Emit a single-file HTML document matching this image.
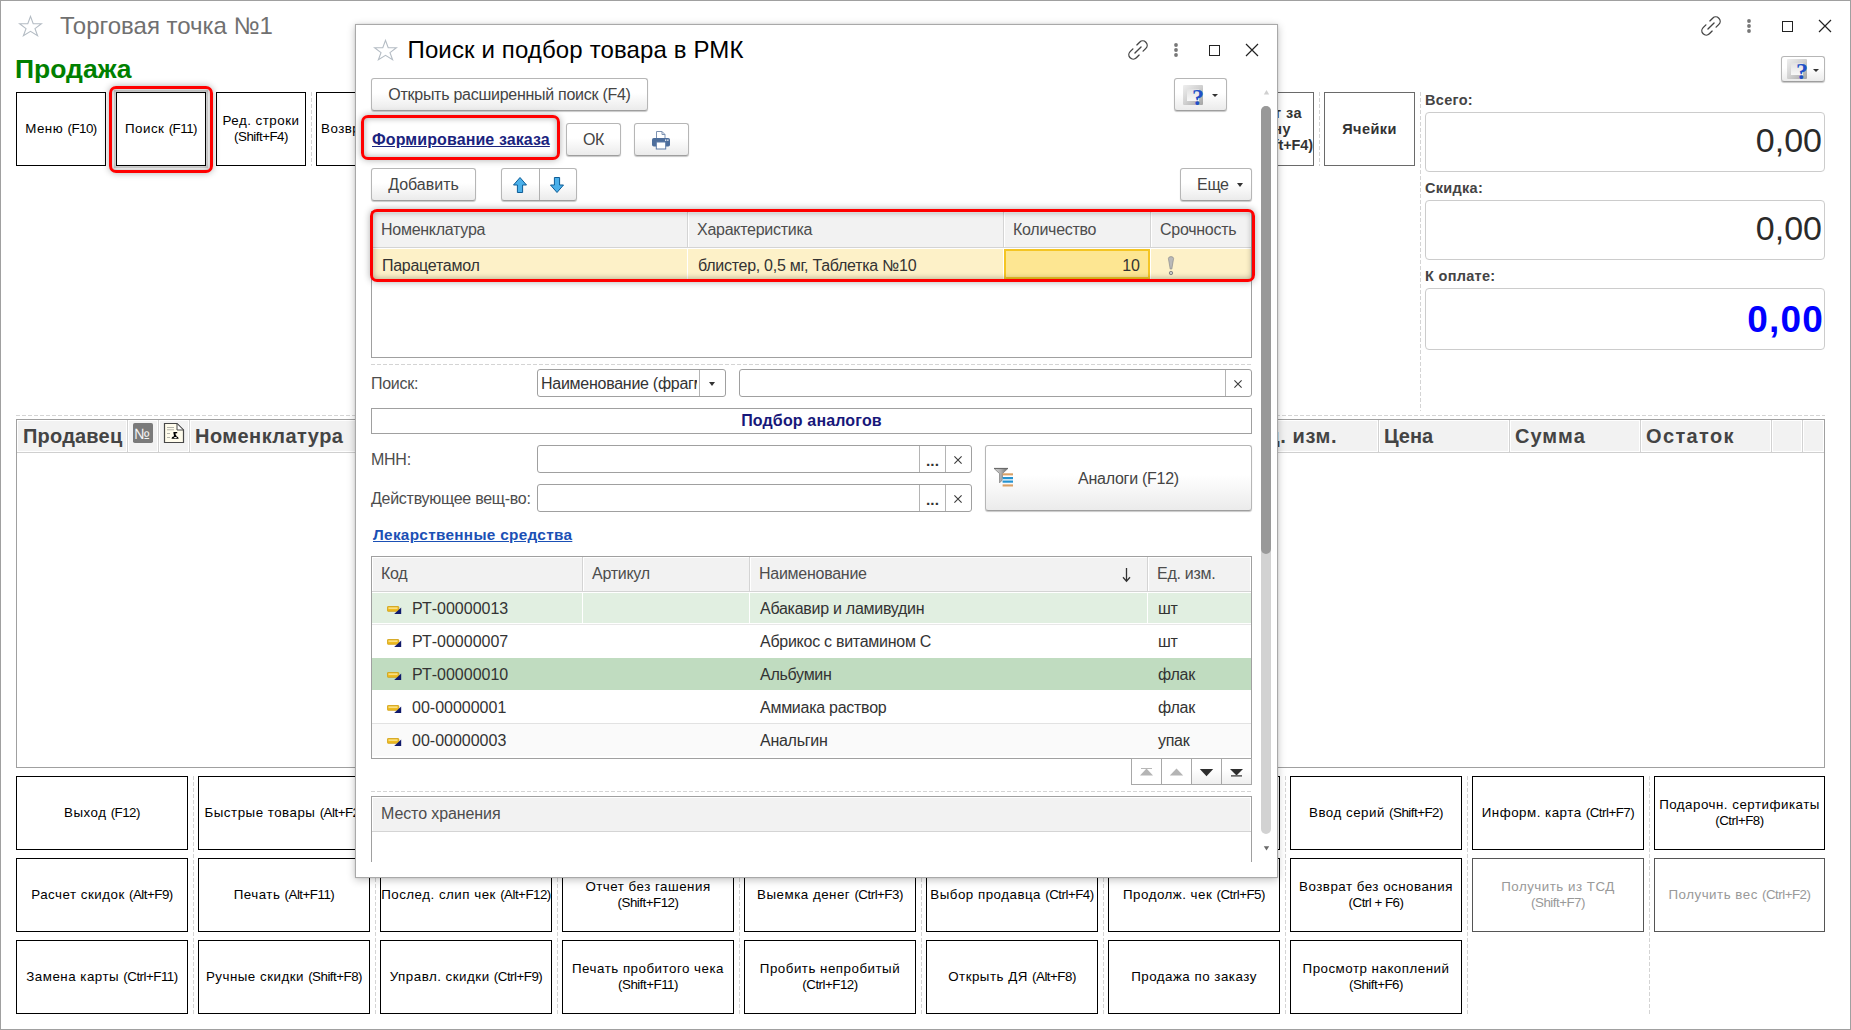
<!DOCTYPE html>
<html lang="ru">
<head>
<meta charset="utf-8">
<title>Торговая точка №1</title>
<style>
*{box-sizing:border-box;margin:0;padding:0}
html,body{width:1851px;height:1030px;overflow:hidden;background:#fff}
body{position:relative;font-family:"Liberation Sans",Arial,sans-serif;color:#333;font-size:13.33px}
.abs{position:absolute}
#frame{position:absolute;left:0;top:0;width:1851px;height:1030px;border:1px solid #a0a0a0;pointer-events:none;z-index:50}
.t{position:absolute;white-space:nowrap;line-height:1}
/* main big buttons */
.bb{position:absolute;border:1px solid #000;background:#fff;display:flex;align-items:center;justify-content:center;text-align:center;font-size:13.33px;line-height:16px;color:#000;letter-spacing:.5px;padding-bottom:1px}
.bb .l{letter-spacing:-.5px}
.bb.dis{border-color:#555;color:#999}
.bb.bold{font-weight:bold;border-color:#6a6a6a;color:#333;font-size:14.5px;letter-spacing:.45px;line-height:16px;padding-top:0}
.vd{position:absolute;width:1px;background:repeating-linear-gradient(180deg,#d4d4d4 0,#d4d4d4 4px,transparent 4px,transparent 6px)}
.hd{position:absolute;height:1px;background:repeating-linear-gradient(90deg,#d4d4d4 0,#d4d4d4 4px,transparent 4px,transparent 6px)}
/* right totals */
.lab{position:absolute;font-weight:bold;font-size:14.5px;letter-spacing:.3px;color:#444;white-space:nowrap;line-height:1}
.fld{position:absolute;left:1425px;width:400px;height:60px;border:1px solid #ccc;border-radius:4px;background:#fff}
.fld span{position:absolute;right:2px;top:8px;font-size:34px;line-height:38px;letter-spacing:0;color:#2a2a2a;white-space:nowrap}
/* main table */
#mt{position:absolute;left:16px;top:419px;width:1809px;height:349px;border:1px solid #a0a0a0;background:#fff}
#mt .h{position:absolute;left:0;top:0;right:0;height:33px;background:#fff;border-bottom:1px solid #cfcfcf}
#mt .c{position:absolute;top:1px;height:30px;background:#f2f2f2}
#mt .s{position:absolute;top:0;width:1px;height:32px;background:#d2d2d2}
#mt .ht{position:absolute;top:5px;font-weight:bold;font-size:20px;line-height:22px;letter-spacing:.6px;color:#444;white-space:nowrap}

/* modal widgets */
.mb{position:absolute;height:33px;border:1px solid #b6b6b6;border-bottom-color:#9e9e9e;border-radius:3px;background:linear-gradient(#fff 0%,#fff 45%,#ebebeb 100%);box-shadow:0 1px 1px rgba(0,0,0,.22);display:flex;align-items:center;justify-content:center;font-size:16px;letter-spacing:-.27px;color:#444;white-space:nowrap;padding-top:1px}
.hb{border:1px solid #b6b6b6;border-bottom-color:#9e9e9e;border-radius:3px;background:linear-gradient(#fff 0%,#fff 45%,#ebebeb 100%);box-shadow:0 1px 1px rgba(0,0,0,.22)}
.dd{display:inline-block;width:0;height:0;border-left:3.5px solid transparent;border-right:3.5px solid transparent;border-top:4px solid #333}
.red{position:absolute;border:3px solid #ff0000;border-radius:7px;box-shadow:0 0 7px rgba(0,0,0,.32),inset 0 0 6px rgba(0,0,0,.35);pointer-events:none}
.tb{position:absolute;border:1px solid #a0a0a0;background:#fff;overflow:hidden}
.tb .th{position:absolute;left:0;right:0;top:0;background:#f2f2f2;border-left:1px solid #fff;border-top:1px solid #fff;border-right:1px solid #fff}
.tb .hl{position:absolute;left:0;right:0;height:1px;background:#d4d4d4}
.tb .row{position:absolute;left:0;right:0}
.tb .cd{position:absolute;width:2px;border-left:1px solid #d4d4d4;border-right:1px solid #fff}
.tb .cw{position:absolute;width:1px;background:#fff}
.hx{position:absolute;margin-left:-1px;font-size:16px;letter-spacing:-.27px;line-height:20px;color:#4d4d4d;white-space:nowrap}
.cx{position:absolute;font-size:16px;letter-spacing:-.27px;line-height:20px;color:#333;white-space:nowrap}
.lb{position:absolute;font-size:16px;letter-spacing:-.27px;line-height:20px;color:#4d4d4d;white-space:nowrap}
.inp{position:absolute;height:28px;border:1px solid #a0a0a0;border-radius:3px;background:#fff;overflow:hidden}
.inp .iv{position:absolute;top:4px;font-size:16px;letter-spacing:-.27px;line-height:20px;color:#333;white-space:nowrap;overflow:hidden}
.inp .sep{position:absolute;top:0;width:1px;height:26px;background:#b4b4b4}
.inp .dots{position:absolute;left:382px;width:25px;top:5px;text-align:center;font-size:15.33px;line-height:20px;font-weight:bold;color:#333}
</style>
</head>
<body>
<div id="frame"></div>

<!-- ===== main window title ===== -->
<svg class="abs" style="left:18px;top:14px" width="25" height="24" viewBox="0 0 25 24"><path d="M12.5 2.4 L15.2 9.6 L23.4 9.7 L17 14.6 L19.6 21.7 L12.5 17.4 L5.4 21.7 L8 14.6 L1.6 9.7 L9.8 9.6 Z" fill="none" stroke="#b4bcc4" stroke-width="1.1" stroke-linejoin="miter"/></svg>
<div class="t" style="left:60px;top:13px;font-size:24px;line-height:26px;color:#707070">Торговая точка №1</div>
<!-- right icons -->
<svg class="abs" style="left:1698.5px;top:13.5px" width="24" height="24" viewBox="-12 -12 24 24" fill="none" stroke="#444" stroke-width="1.35" stroke-linecap="round"><g transform="rotate(-45)"><path d="M2.8 -4.4 H6.7 A4.4 4.4 0 0 1 6.7 4.4 H2.8"/><path d="M-2.8 -4.4 H-6.7 A4.4 4.4 0 0 0 -6.7 4.4 H-2.8"/><path d="M-4.3 0 H4.3"/></g></svg>
<svg class="abs" style="left:1746px;top:18px" width="6" height="16" viewBox="-3 -8 6 16" fill="#777"><circle cx="0" cy="-5" r="1.9"/><circle cx="0" cy="0" r="1.9"/><circle cx="0" cy="5" r="1.9"/></svg>
<div class="abs" style="left:1782px;top:21px;width:11px;height:11px;border:1px solid #222"></div>
<svg class="abs" style="left:1817px;top:19px" width="16" height="14" viewBox="0 0 16 14" stroke="#222" stroke-width="1.2" fill="none"><path d="M2 1 L14 13 M14 1 L2 13"/></svg>

<div class="t" style="left:15px;top:54px;font-size:26.5px;line-height:30px;font-weight:bold;color:#008000">Продажа</div>

<!-- help button main -->
<div class="abs hb" style="left:1781px;top:56px;width:44px;height:26px"></div><div class="abs" style="left:1787px;top:59px;width:20px;height:20px;background:linear-gradient(135deg,#efefef 0%,#d0d0d0 50%,#a4a4a4 100%);border-radius:1px"></div><div class="abs" style="left:1791px;top:63px;width:12px;height:12px;background:linear-gradient(#e2e2e2,#f8f8f8)"></div><div class="t" style="left:1796px;top:60px;font-family:'Liberation Serif',serif;font-weight:bold;font-size:24px;line-height:22px;color:#2050c8">?</div><i class="dd abs" style="left:1813px;top:69px;border-left-width:3px;border-right-width:3px;border-top-width:3.5px"></i>

<!-- ===== top button row ===== -->
<div class="bb" style="left:16px;top:92px;width:90px;height:74px"><div>Меню <span class="l">(F10)</span></div></div>
<div class="bb" style="left:116px;top:92px;width:90px;height:74px;box-shadow:0 0 0 2px #d6d6d6"><div>Поиск <span class="l">(F11)</span></div></div>
<div class="bb" style="left:216px;top:92px;width:90px;height:74px"><div>Ред. строки<br><span class="l">(Shift+F4)</span></div></div>
<div class="red" style="left:109px;top:86px;width:104px;height:87px"></div>
<div class="vd" style="left:311px;top:92px;height:74px"></div>
<div class="bb" style="left:316px;top:92px;width:90px;height:74px;justify-content:flex-start;padding-left:4px"><div>Возврат</div></div>
<div class="bb bold" style="left:1224px;top:92px;width:90px;height:74px;overflow:hidden"><div style="width:88px;white-space:nowrap;text-align:right"><div style="padding-right:11px">Отчет за</div><div style="padding-right:22px">смену</div><div style="letter-spacing:-.1px">(Shift+F4)</div></div></div>
<div class="vd" style="left:1319px;top:92px;height:74px"></div>
<div class="bb bold" style="left:1324px;top:92px;width:91px;height:74px">Ячейки</div>
<div class="vd" style="left:1420px;top:92px;height:319px"></div>

<!-- ===== totals ===== -->
<div class="lab" style="left:1425px;top:93px">Всего:</div>
<div class="fld" style="top:112px"><span>0,00</span></div>
<div class="lab" style="left:1425px;top:181px">Скидка:</div>
<div class="fld" style="top:200px"><span>0,00</span></div>
<div class="lab" style="left:1425px;top:269px">К оплате:</div>
<div class="fld" style="top:288px;height:62px"><span style="color:#0000ff;font-weight:bold;font-size:37px;top:12px;letter-spacing:1.2px;right:0">0,00</span></div>

<div class="hd" style="left:16px;top:415px;width:1809px"></div>

<!-- ===== main table ===== -->
<div id="mt">
 <div class="h"></div>
 <div class="c" style="left:1px;width:108px"></div>
 <div class="c" style="left:112px;width:28px"></div>
 <div class="c" style="left:143px;width:28px"></div>
 <div class="c" style="left:174px;width:1055px"></div>
 <div class="c" style="left:1232px;width:128px"></div>
 <div class="c" style="left:1363px;width:128px"></div>
 <div class="c" style="left:1494px;width:128px"></div>
 <div class="c" style="left:1625px;width:128px"></div>
 <div class="c" style="left:1756px;width:28px"></div>
 <div class="c" style="left:1787px;width:19px"></div>
 <div class="s" style="left:110px"></div>
 <div class="s" style="left:141px"></div>
 <div class="s" style="left:172px"></div>
 <div class="s" style="left:1230px"></div>
 <div class="s" style="left:1361px"></div>
 <div class="s" style="left:1492px"></div>
 <div class="s" style="left:1623px"></div>
 <div class="s" style="left:1754px"></div>
 <div class="s" style="left:1785px"></div>
 <div class="ht" style="left:6px;letter-spacing:.2px">Продавец</div>
 <div class="ht" style="left:178px;letter-spacing:.45px">Номенклатура</div>
 <div class="ht" style="left:1236px">Ед. изм.</div>
 <div class="ht" style="left:1367px;letter-spacing:0">Цена</div>
 <div class="ht" style="left:1498px;letter-spacing:1px">Сумма</div>
 <div class="ht" style="left:1629px;letter-spacing:1.35px">Остаток</div>

 <svg class="abs" style="left:115px;top:2px" width="22" height="22" viewBox="0 0 22 22"><rect x="1" y="1" width="20" height="20" rx="1.8" fill="#7a7a7a"/><text x="2.2" y="16.6" font-family="Liberation Sans, sans-serif" font-size="14.8" fill="#f4f4f4">№</text></svg>
 <svg class="abs" style="left:146px;top:2px" width="22" height="22" viewBox="0 0 22 22"><path d="M1.5 1.5 H14 L20.5 8 V20.5 H1.5 Z" fill="#fffcec" stroke="#484848" stroke-width="1.2"/><path d="M14 1.5 V8 H20.5 Z" fill="#fff" stroke="#484848" stroke-width="1"/><path d="M4 5.5 H11 M4 7.8 H11" stroke="#b5b5ad" stroke-width="1"/><path d="M4 11.5 H7 M4 15.5 H7" stroke="#b5b5ad" stroke-width="1"/><path d="M10.4 10 H14.2 V11.2 H12.6 C12.2 12.8 13.4 13 13.6 14.4 C15 14.6 15.6 15.4 15.6 16.8 H8.6 C8.6 15.4 9.2 14.6 10.8 14.4 C11.4 13 10.2 12.2 10.4 10 Z" fill="#000"/><ellipse cx="12.4" cy="15.6" rx="1.6" ry=".6" fill="#fff"/></svg>

</div>

<!-- ===== bottom buttons (grid) ===== -->
<div class="bb" style="left:16px;top:776px;width:172px;height:74px"><div>Выход <span class="l">(F12)</span></div></div>
<div class="bb" style="left:198px;top:776px;width:172px;height:74px"><div>Быстрые товары <span class="l">(Alt+F2)</span></div></div>
<div class="bb" style="left:380px;top:776px;width:172px;height:74px"><div>Оплата наличными <span class="l">(F6)</span></div></div>
<div class="bb" style="left:562px;top:776px;width:172px;height:74px"><div>Оплата картой <span class="l">(F7)</span></div></div>
<div class="bb" style="left:744px;top:776px;width:172px;height:74px"><div>Смешанная оплата <span class="l">(F8)</span></div></div>
<div class="bb" style="left:926px;top:776px;width:172px;height:74px"><div>Отмена чека <span class="l">(F9)</span></div></div>
<div class="bb" style="left:1108px;top:776px;width:172px;height:74px"><div>Отложить чек <span class="l">(Alt+F5)</span></div></div>
<div class="bb" style="left:1290px;top:776px;width:172px;height:74px"><div>Ввод серий <span class="l">(Shift+F2)</span></div></div>
<div class="bb" style="left:1472px;top:776px;width:172px;height:74px"><div>Информ. карта <span class="l">(Ctrl+F7)</span></div></div>
<div class="bb" style="left:1654px;top:776px;width:171px;height:74px"><div>Подарочн. сертификаты<br><span class="l">(Ctrl+F8)</span></div></div>
<div class="bb" style="left:16px;top:858px;width:172px;height:74px"><div>Расчет скидок <span class="l">(Alt+F9)</span></div></div>
<div class="bb" style="left:198px;top:858px;width:172px;height:74px"><div>Печать <span class="l">(Alt+F11)</span></div></div>
<div class="bb" style="left:380px;top:858px;width:172px;height:74px"><div>Послед. слип чек <span class="l">(Alt+F12)</span></div></div>
<div class="bb" style="left:562px;top:858px;width:172px;height:74px"><div>Отчет без гашения<br><span class="l">(Shift+F12)</span></div></div>
<div class="bb" style="left:744px;top:858px;width:172px;height:74px"><div>Выемка денег <span class="l">(Ctrl+F3)</span></div></div>
<div class="bb" style="left:926px;top:858px;width:172px;height:74px"><div>Выбор продавца <span class="l">(Ctrl+F4)</span></div></div>
<div class="bb" style="left:1108px;top:858px;width:172px;height:74px"><div>Продолж. чек <span class="l">(Ctrl+F5)</span></div></div>
<div class="bb" style="left:1290px;top:858px;width:172px;height:74px"><div>Возврат без основания<br><span class="l">(Ctrl + F6)</span></div></div>
<div class="bb dis" style="left:1472px;top:858px;width:172px;height:74px"><div>Получить из ТСД<br><span class="l">(Shift+F7)</span></div></div>
<div class="bb dis" style="left:1654px;top:858px;width:171px;height:74px"><div>Получить вес <span class="l">(Ctrl+F2)</span></div></div>
<div class="bb" style="left:16px;top:940px;width:172px;height:74px"><div>Замена карты <span class="l">(Ctrl+F11)</span></div></div>
<div class="bb" style="left:198px;top:940px;width:172px;height:74px"><div>Ручные скидки <span class="l">(Shift+F8)</span></div></div>
<div class="bb" style="left:380px;top:940px;width:172px;height:74px"><div>Управл. скидки <span class="l">(Ctrl+F9)</span></div></div>
<div class="bb" style="left:562px;top:940px;width:172px;height:74px"><div>Печать пробитого чека<br><span class="l">(Shift+F11)</span></div></div>
<div class="bb" style="left:744px;top:940px;width:172px;height:74px"><div>Пробить непробитый<br><span class="l">(Ctrl+F12)</span></div></div>
<div class="bb" style="left:926px;top:940px;width:172px;height:74px"><div>Открыть ДЯ <span class="l">(Alt+F8)</span></div></div>
<div class="bb" style="left:1108px;top:940px;width:172px;height:74px"><div>Продажа по заказу</div></div>
<div class="bb" style="left:1290px;top:940px;width:172px;height:74px"><div>Просмотр накоплений<br><span class="l">(Shift+F6)</span></div></div>
<div class="vd" style="left:193px;top:776px;height:238px"></div>
<div class="vd" style="left:375px;top:776px;height:238px"></div>
<div class="vd" style="left:557px;top:776px;height:238px"></div>
<div class="vd" style="left:739px;top:776px;height:238px"></div>
<div class="vd" style="left:921px;top:776px;height:238px"></div>
<div class="vd" style="left:1103px;top:776px;height:238px"></div>
<div class="vd" style="left:1285px;top:776px;height:238px"></div>
<div class="vd" style="left:1467px;top:776px;height:238px"></div>
<div class="vd" style="left:1649px;top:776px;height:238px"></div>

<!-- ===== MODAL ===== -->
<div class="abs" id="modal" style="left:355px;top:24px;width:923px;height:854px;background:#fff;border:1px solid #a9a9a9;box-shadow:0 2px 8px rgba(0,0,0,.24),0 0 2px rgba(0,0,0,.1)"></div>
<svg class="abs" style="left:373px;top:38px" width="25" height="24" viewBox="0 0 25 24"><path d="M12.5 2.4 L15.2 9.6 L23.4 9.7 L17 14.6 L19.6 21.7 L12.5 17.4 L5.4 21.7 L8 14.6 L1.6 9.7 L9.8 9.6 Z" fill="none" stroke="#b4bcc4" stroke-width="1.1"/></svg>
<div class="t" style="left:407.5px;top:37px;font-size:24px;line-height:26px;color:#000;letter-spacing:.13px">Поиск и подбор товара в РМК</div>
<svg class="abs" style="left:1125.5px;top:37.5px" width="24" height="24" viewBox="-12 -12 24 24" fill="none" stroke="#444" stroke-width="1.35" stroke-linecap="round"><g transform="rotate(-45)"><path d="M2.8 -4.4 H6.7 A4.4 4.4 0 0 1 6.7 4.4 H2.8"/><path d="M-2.8 -4.4 H-6.7 A4.4 4.4 0 0 0 -6.7 4.4 H-2.8"/><path d="M-4.3 0 H4.3"/></g></svg>
<svg class="abs" style="left:1173px;top:42px" width="6" height="16" viewBox="-3 -8 6 16" fill="#777"><circle cx="0" cy="-5" r="1.9"/><circle cx="0" cy="0" r="1.9"/><circle cx="0" cy="5" r="1.9"/></svg>
<div class="abs" style="left:1209px;top:45px;width:11px;height:11px;border:1px solid #222"></div>
<svg class="abs" style="left:1244px;top:43px" width="16" height="14" viewBox="0 0 16 14" stroke="#222" stroke-width="1.2" fill="none"><path d="M2 1 L14 13 M14 1 L2 13"/></svg>

<div class="mb" style="left:371px;top:78px;width:277px">Открыть расширенный поиск (F4)</div>
<div class="abs hb" style="left:1174px;top:78px;width:53px;height:33px"></div><div class="abs" style="left:1183px;top:85px;width:20px;height:20px;background:linear-gradient(135deg,#efefef 0%,#d0d0d0 50%,#a4a4a4 100%);border-radius:1px"></div><div class="abs" style="left:1187px;top:89px;width:12px;height:12px;background:linear-gradient(#e2e2e2,#f8f8f8)"></div><div class="t" style="left:1192px;top:86px;font-family:'Liberation Serif',serif;font-weight:bold;font-size:24px;line-height:22px;color:#2050c8">?</div><i class="dd abs" style="left:1212px;top:94px;border-left-width:3px;border-right-width:3px;border-top-width:3.5px"></i>

<div class="red" style="left:361px;top:115px;width:199px;height:45px"></div>
<div class="t" style="left:372px;top:130px;font-size:16px;line-height:20px;font-weight:bold;color:#1a237e;text-decoration:underline;letter-spacing:.1px">Формирование заказа</div>
<div class="mb" style="left:566px;top:123px;width:55px">ОК</div>
<div class="mb" style="left:634px;top:123px;width:55px;padding-right:2px"><svg width="20" height="20" viewBox="0 0 20 20"><path d="M5.5 8 V1.5 H11 L14 4.5 V8" fill="#fff" stroke="#7d93b3" stroke-width="1"/><path d="M11 1.5 V4.5 H14" fill="none" stroke="#7d93b3" stroke-width="1"/><rect x="1" y="8" width="18" height="8.5" rx="1.8" fill="#4d6e9c"/><rect x="14" y="9.5" width="1.3" height="1.3" fill="#fff"/><rect x="16.2" y="9.5" width="1.3" height="1.3" fill="#fff"/><rect x="5.3" y="12" width="9.4" height="7" fill="#fff" stroke="#5c7aa5" stroke-width="1"/></svg></div>

<div class="mb" style="left:371px;top:168px;width:105px;letter-spacing:0">Добавить</div>
<div class="mb" style="left:501px;top:168px;width:76px"></div>
<div class="abs" style="left:539px;top:169px;width:1px;height:31px;background:#b0b0b0"></div>
<svg class="abs" style="left:511px;top:176px" width="18" height="18" viewBox="0 0 18 18"><path d="M9 1.5 L15.5 9 H11.6 V16.5 H6.4 V9 H2.5 Z" fill="#4ab0ea" stroke="#0d5c96" stroke-width="1" stroke-linejoin="round"/></svg>
<svg class="abs" style="left:548px;top:176px" width="18" height="18" viewBox="0 0 18 18"><path d="M9 16.5 L15.5 9 H11.6 V1.5 H6.4 V9 H2.5 Z" fill="#4ab0ea" stroke="#0d5c96" stroke-width="1" stroke-linejoin="round"/></svg>
<div class="mb" style="left:1180px;top:168px;width:72px;justify-content:flex-start;padding-left:16px">Еще<i class="dd" style="margin-left:8px"></i></div>
<!-- table 1 -->
<div class="tb" style="left:371px;top:211px;width:881px;height:147px">
 <div class="th" style="height:35px"></div>
 <div class="hl" style="top:35px"></div>
 <div class="row" style="top:37px;height:30px;background:#fdf1c8"></div>
 <div class="cd" style="left:315px;top:0;height:35px"></div><div class="cw" style="left:315px;top:36px;height:32px"></div>
 <div class="cd" style="left:631px;top:0;height:35px"></div><div class="cw" style="left:631px;top:36px;height:32px"></div>
 <div class="cd" style="left:778px;top:0;height:35px"></div><div class="cw" style="left:778px;top:36px;height:32px"></div>
 <div class="hx" style="left:10px;top:8px">Номенклатура</div>
 <div class="hx" style="left:326px;top:8px">Характеристика</div>
 <div class="hx" style="left:642px;top:8px">Количество</div>
 <div class="hx" style="left:789px;top:8px">Срочность</div>
 <div class="cx" style="left:10px;top:44px">Парацетамол</div>
 <div class="cx" style="left:326px;top:44px">блистер, 0,5 мг, Таблетка №10</div>
 <div class="abs" style="left:632px;top:37px;width:146px;height:30px;border:2px solid #f4c524;background:#fde692"></div>
 <div class="cx" style="left:632px;width:136px;text-align:right;top:44px;letter-spacing:0">10</div>
 <svg class="abs" style="left:794px;top:44px" width="10" height="20" viewBox="0 0 10 20"><path d="M2.4 2.4 Q2.6 0.6 5 0.6 Q7.4 0.6 7.6 2.4 L5.8 13 H4.2 Z" fill="#b9b9b9" stroke="#8d8d8d" stroke-width=".7"/><circle cx="5" cy="17" r="1.7" fill="#c9c9c9" stroke="#7f7f7f" stroke-width=".9"/></svg>
</div>
<div class="red" style="left:370px;top:209px;width:885px;height:73px"></div>

<div class="hd" style="left:371px;top:364px;width:881px"></div>
<div class="lb" style="left:371px;top:374px">Поиск:</div>
<div class="inp" style="left:537px;top:369px;width:189px"><div class="iv" style="left:3px;width:156px">Наименование (фрагмент)</div><div class="sep" style="left:161px"></div><i class="dd" style="position:absolute;left:171px;top:12px"></i></div>
<div class="inp" style="left:739px;top:369px;width:513px"><div class="sep" style="left:485px"></div><svg class="abs" style="left:493px;top:8px" width="11" height="11" viewBox="0 0 11 11" stroke="#3a3a3a" stroke-width="1.1"><path d="M1.4 2.4 L8.6 9.6 M8.6 2.4 L1.4 9.6"/></svg></div>

<div class="abs" style="left:371px;top:408px;width:881px;height:26px;border:1px solid #a0a0a0;text-align:center;font-weight:bold;font-size:16px;line-height:23px;letter-spacing:.15px;color:#17177a">Подбор аналогов</div>

<div class="lb" style="left:371px;top:450px">МНН:</div>
<div class="inp" style="left:537px;top:445px;width:435px"><div class="sep" style="left:381px"></div><div class="dots">...</div><div class="sep" style="left:407px"></div><svg class="abs" style="left:415px;top:8px" width="11" height="11" viewBox="0 0 11 11" stroke="#3a3a3a" stroke-width="1.1"><path d="M1.4 2.4 L8.6 9.6 M8.6 2.4 L1.4 9.6"/></svg></div>
<div class="lb" style="left:371px;top:489px">Действующее вещ-во:</div>
<div class="inp" style="left:537px;top:484px;width:435px"><div class="sep" style="left:381px"></div><div class="dots">...</div><div class="sep" style="left:407px"></div><svg class="abs" style="left:415px;top:8px" width="11" height="11" viewBox="0 0 11 11" stroke="#3a3a3a" stroke-width="1.1"><path d="M1.4 2.4 L8.6 9.6 M8.6 2.4 L1.4 9.6"/></svg></div>
<div class="mb" style="left:985px;top:445px;width:267px;height:66px;padding-left:20px">Аналоги (F12)</div>
<svg class="abs" style="left:993px;top:467px" width="21" height="21" viewBox="0 0 21 21"><defs><linearGradient id="fg" x1="0" x2="1" y1="0" y2="0"><stop offset="0" stop-color="#d8d8d8"/><stop offset=".5" stop-color="#b0b0b0"/><stop offset="1" stop-color="#6a6a6a"/></linearGradient></defs><path d="M1.2 1.6 H14.8 L9.4 6.6 V13 L6.6 15.8 V6.6 Z" fill="url(#fg)" stroke="#707070" stroke-width=".7"/><path d="M1 1.4 H15" stroke="#666" stroke-width="1"/><rect x="9.6" y="11" width="10.4" height="4" fill="#dceef8"/><rect x="9.6" y="6.3" width="10.4" height="2.1" fill="#d9a066"/><rect x="9.6" y="10" width="10.4" height="2.1" fill="#2392d0"/><rect x="9.6" y="13.6" width="10.4" height="2.1" fill="#2392d0"/><rect x="9.6" y="17.4" width="10.4" height="2.1" fill="#d9a066"/></svg>

<div class="t" style="left:373px;top:526px;font-size:15.33px;line-height:18px;font-weight:bold;color:#1b50b5;text-decoration:underline;letter-spacing:.3px">Лекарственные средства</div>
<!-- table 2 -->
<div class="tb" style="left:371px;top:556px;width:881px;height:203px">
 <div class="th" style="height:34px"></div><div class="hl" style="top:34px"></div>
 <div class="cd" style="left:210px;top:0;height:34px"></div>
 <div class="cd" style="left:377px;top:0;height:34px"></div>
 <div class="cd" style="left:775px;top:0;height:34px"></div>
 <div class="hx" style="left:10px;top:7px">Код</div><div class="hx" style="left:221px;top:7px">Артикул</div><div class="hx" style="left:388px;top:7px">Наименование</div><div class="hx" style="left:786px;top:7px">Ед. изм.</div>
 <svg class="abs" style="left:749px;top:10px" width="11" height="16" viewBox="0 0 11 16" fill="none" stroke="#333" stroke-width="1.3"><path d="M5.5 1 V14 M2 10.3 L5.5 14.2 L9 10.3"/></svg>
 <div class="row" style="top:36px;height:30px;background:#e1efe1"></div><div class="abs" style="left:0;right:0;top:67px;height:1px;background:#e8e8e8"></div>
 <div class="cw" style="left:210px;top:36px;height:30px"></div>
 <div class="cw" style="left:377px;top:36px;height:30px"></div>
 <div class="cw" style="left:775px;top:36px;height:30px"></div>
 <svg class="abs" style="left:15px;top:49px" width="16" height="10" viewBox="0 0 16 10"><rect x="0.4" y="0.5" width="11.4" height="4.8" rx=".7" fill="#eebb22" stroke="#cf9e10" stroke-width=".8"/><rect x="1.5" y="1.5" width="9" height="1.3" fill="#fbe89a"/><path d="M14.2 1.6 V8 H7.2 Z" fill="#101a6b"/></svg>
 <div class="cx" style="letter-spacing:0;left:40px;top:42px">РТ-00000013</div><div class="cx" style="left:388px;top:42px">Абакавир и ламивудин</div><div class="cx" style="left:786px;top:42px">шт</div>
 <div class="row" style="top:68px;height:32px;background:#fff"></div>
 <svg class="abs" style="left:15px;top:82px" width="16" height="10" viewBox="0 0 16 10"><rect x="0.4" y="0.5" width="11.4" height="4.8" rx=".7" fill="#eebb22" stroke="#cf9e10" stroke-width=".8"/><rect x="1.5" y="1.5" width="9" height="1.3" fill="#fbe89a"/><path d="M14.2 1.6 V8 H7.2 Z" fill="#101a6b"/></svg>
 <div class="cx" style="letter-spacing:0;left:40px;top:75px">РТ-00000007</div><div class="cx" style="left:388px;top:75px">Абрикос с витамином С</div><div class="cx" style="left:786px;top:75px">шт</div>
 <div class="row" style="top:101px;height:32px;background:#c0dcc0"></div>
 <svg class="abs" style="left:15px;top:115px" width="16" height="10" viewBox="0 0 16 10"><rect x="0.4" y="0.5" width="11.4" height="4.8" rx=".7" fill="#eebb22" stroke="#cf9e10" stroke-width=".8"/><rect x="1.5" y="1.5" width="9" height="1.3" fill="#fbe89a"/><path d="M14.2 1.6 V8 H7.2 Z" fill="#101a6b"/></svg>
 <div class="cx" style="letter-spacing:0;left:40px;top:108px">РТ-00000010</div><div class="cx" style="left:388px;top:108px">Альбумин</div><div class="cx" style="left:786px;top:108px">флак</div>
 <div class="row" style="top:134px;height:32px;background:#fff"></div>
 <svg class="abs" style="left:15px;top:148px" width="16" height="10" viewBox="0 0 16 10"><rect x="0.4" y="0.5" width="11.4" height="4.8" rx=".7" fill="#eebb22" stroke="#cf9e10" stroke-width=".8"/><rect x="1.5" y="1.5" width="9" height="1.3" fill="#fbe89a"/><path d="M14.2 1.6 V8 H7.2 Z" fill="#101a6b"/></svg>
 <div class="cx" style="letter-spacing:0;left:40px;top:141px">00-00000001</div><div class="cx" style="left:388px;top:141px">Аммиака раствор</div><div class="cx" style="left:786px;top:141px">флак</div>
 <div class="row" style="top:167px;height:32px;background:#fafafa"></div>
 <svg class="abs" style="left:15px;top:181px" width="16" height="10" viewBox="0 0 16 10"><rect x="0.4" y="0.5" width="11.4" height="4.8" rx=".7" fill="#eebb22" stroke="#cf9e10" stroke-width=".8"/><rect x="1.5" y="1.5" width="9" height="1.3" fill="#fbe89a"/><path d="M14.2 1.6 V8 H7.2 Z" fill="#101a6b"/></svg>
 <div class="cx" style="letter-spacing:0;left:40px;top:174px">00-00000003</div><div class="cx" style="left:388px;top:174px">Анальгин</div><div class="cx" style="left:786px;top:174px">упак</div>
 <div class="abs" style="left:0;right:0;top:166px;height:1px;background:#e2e2e2"></div>
</div>
<div class="abs" style="left:1131px;top:758px;width:121px;height:27px;border:1px solid #a8a8a8;background:#fff"></div>
<div class="abs" style="left:1192px;top:759px;width:59px;height:25px;background:linear-gradient(#fff 0%,#fff 40%,#efefef 100%)"></div>
<div class="abs" style="left:1161px;top:759px;width:1px;height:25px;background:#a8a8a8"></div>
<div class="abs" style="left:1191px;top:759px;width:1px;height:25px;background:#a8a8a8"></div>
<div class="abs" style="left:1221px;top:759px;width:1px;height:25px;background:#a8a8a8"></div>
<svg class="abs" style="left:1139px;top:767px" width="16" height="10" viewBox="0 0 16 10"><rect x="2" y="1" width="11" height="1" fill="#b8b8b8"/><path d="M7.5 1.6 L14 8.6 H1 Z" fill="#b4b4b4"/></svg>
<svg class="abs" style="left:1169px;top:767px" width="16" height="10" viewBox="0 0 16 10"><path d="M7.5 1.4 L14.2 8.6 H0.8 Z" fill="#b4b4b4"/></svg>
<svg class="abs" style="left:1199px;top:767px" width="16" height="10" viewBox="0 0 16 10"><path d="M7.5 9.2 L14.2 2 H0.8 Z" fill="#2e2e2e"/></svg>
<svg class="abs" style="left:1229px;top:767px" width="16" height="11" viewBox="0 0 16 11"><path d="M7.5 8.6 L14 2 H1 Z" fill="#2e2e2e"/><rect x="2" y="8" width="11" height="1.7" fill="#6a6a6a"/></svg>
<div class="hd" style="left:371px;top:791px;width:881px"></div>
<!-- table 3 -->
<div class="tb" style="left:371px;top:796px;width:881px;height:66px;border-bottom:none"><div class="th" style="height:34px"></div><div class="hl" style="top:34px"></div><div class="hx" style="left:10px;top:7px;letter-spacing:-.1px">Место хранения</div></div>
<svg class="abs" style="left:1262px;top:89px" width="9" height="7" viewBox="0 0 9 7"><path d="M4.5 1 L7.2 5.4 H1.8 Z" fill="#d0d0d0"/></svg>
<div class="abs" style="left:1261px;top:106px;width:10px;height:728px;border-radius:5px;background:#d2d2d2"></div>
<div class="abs" style="left:1261px;top:106px;width:10px;height:448px;border-radius:5px;background:#999"></div>
<svg class="abs" style="left:1262px;top:845px" width="9" height="7" viewBox="0 0 9 7"><path d="M4.5 5.6 L7.2 1.2 H1.8 Z" fill="#6a6a6a"/></svg>

</body>
</html>
